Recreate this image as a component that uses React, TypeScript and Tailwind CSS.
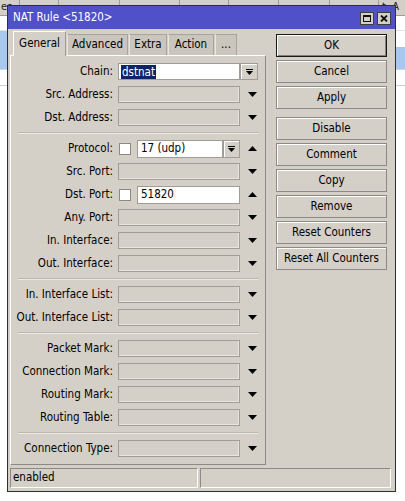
import type { ReactNode } from 'react';

// Classic WinBox-style "NAT Rule" dialog over a table in the background.

type Kind = 'combo' | 'empty' | 'check' | 'checkCombo';

function DownTri() {
  return (
    <svg width="9" height="5" viewBox="0 0 9 5" className="block">
      <polygon points="0,0 9,0 4.5,5" fill="#000" />
    </svg>
  );
}

function UpTri() {
  return (
    <svg width="9" height="5" viewBox="0 0 9 5" className="block">
      <polygon points="0,5 9,5 4.5,0" fill="#000" />
    </svg>
  );
}

function ComboBtn({ w = 'w-[18px]', h = 'h-[17px]' }: { w?: string; h?: string }) {
  return (
    <div className={`${w} ${h} shrink-0 flex items-center justify-center border border-[#a09c98] bg-[#d4d0c8] shadow-[inset_1px_1px_0_#ffffff]`}>
      <svg width="7" height="6" viewBox="0 0 7 6" className="block">
        <rect x="0" y="0" width="7" height="1" fill="#000" />
        <polygon points="0,2 7,2 3.5,6" fill="#000" />
      </svg>
    </div>
  );
}

function Field({ label, kind, value, up }: { label: string; kind: Kind; value?: string; up?: boolean }) {
  return (
    <div className="flex items-center h-[23px]">
      <div className="w-[103px] shrink-0 text-right pr-[1px] text-black whitespace-nowrap">{label}</div>
      <div className="ml-[4px] flex items-center">
        {kind === 'combo' && (
          <>
            <div className="w-[122px] h-[17px] bg-white border border-[#a09c98] flex items-center px-[2px]">
              <span className="bg-[#0a246a] text-white px-[1px] leading-[14px]">{value}</span>
            </div>
            <ComboBtn />
          </>
        )}
        {kind === 'empty' && (
          <>
            <div className="w-[122px] h-[17px] border border-[#a09c98] bg-[#d4d0c8] shadow-[inset_-1px_-1px_0_#e8e6e0]" />
            <div className="w-[22px] flex justify-center pl-[2px]"><DownTri /></div>
          </>
        )}
        {(kind === 'check' || kind === 'checkCombo') && (
          <>
            <div className="w-[12px] h-[12px] ml-[1px] bg-white border border-[#8c8a86]" />
            <div className={`${kind === 'checkCombo' ? 'w-[86px]' : 'w-[103px]'} h-[18px] ml-[6px] bg-white border border-[#a09c98] flex items-center px-[3px] text-black`}>
              {value}
            </div>
            {kind === 'checkCombo' && <ComboBtn w="w-[17px]" h="h-[18px]" />}
            <div className="w-[22px] flex justify-center pl-[2px]">{up ? <UpTri /> : <DownTri />}</div>
          </>
        )}
      </div>
    </div>
  );
}

function Sep() {
  return <div className="mx-[7px] my-[3px] h-[2px] border-t border-[#bcb8b0] border-b border-b-[#ece9e4]" />;
}

function Btn({ children, def }: { children: ReactNode; def?: boolean }) {
  return (
    <div
      className={`h-[23px] w-[111px] flex items-center justify-center text-black bg-[#d4d0c8] ${
        def
          ? 'border border-[#1a1a1a] shadow-[inset_1px_1px_0_#ffffff,inset_-1px_-1px_0_#808080]'
          : 'border border-[#8c8a86] shadow-[inset_1px_1px_0_#ffffff]'
      }`}
    >
      {children}
    </div>
  );
}

const tabs = ['General', 'Advanced', 'Extra', 'Action', '...'];

export default function App() {
  return (
    <div className="relative w-[405px] h-[501px] overflow-hidden bg-white font-['DejaVu_Sans_Condensed','DejaVu_Sans',sans-serif] text-[11.5px]">
      {/* background table */}
      <div className="h-[16px] bg-[#d4d0c8] border-b border-[#a09c98] flex text-[11px] text-[#222]">
        <div className="w-[20px] border-r border-[#a09c98] pl-[1px] leading-[14px]">es</div>
        <div className="w-[39px] border-r border-[#a09c98]" />
        <div className="w-[61px] border-r border-[#a09c98]" />
        <div className="w-[60px] border-r border-[#a09c98]" />
        <div className="w-[49px] border-r border-[#a09c98]" />
        <div className="w-[50px] border-r border-[#a09c98]" />
        <div className="w-[51px] border-r border-[#a09c98]" />
        <div className="w-[49px] border-r border-[#a09c98]" />
        <div className="flex-1 pl-[3px] leading-[14px]">t. A</div>
      </div>
      <div className="h-[15px] border-b border-[#e4e4e4]" />
      <div className="h-[16px] bg-[#a8c8f0] flex"><div className="ml-auto w-[12px] bg-white" /></div>
      <div className="h-[23px] bg-[#a8c8f0] border-b border-[#c8d8f0]" />
      <div className="h-[16px] border-b border-[#d0d0d0]" />

      {/* dialog window */}
      <div className="absolute left-[7px] top-[5px] w-[389px] h-[487px] bg-[#d4d0c8] border border-[#303030] flex flex-col">
        <div className="h-[23px] shrink-0 bg-[#5050c8] flex items-center pl-[5px] pr-[4px]">
          <span className="text-white text-[11.5px]">NAT Rule &lt;51820&gt;</span>
          <div className="ml-auto flex gap-[3px] mt-[1px]">
            <div className="w-[14px] h-[13px] bg-[#d4d0c8] border border-[#404040] flex items-center justify-center">
              <div className="w-[8px] h-[7px] border border-[#111] border-t-2" />
            </div>
            <div className="w-[14px] h-[13px] bg-[#d4d0c8] border border-[#404040] flex items-center justify-center">
              <svg width="8" height="7" viewBox="0 0 8 7">
                <path d="M1 0.5 L7 6.5 M7 0.5 L1 6.5" stroke="#111" strokeWidth="1.8" />
              </svg>
            </div>
          </div>
        </div>

        <div className="flex flex-1 pl-[2px] pt-[2px]">
          {/* left: tabs + panel */}
          <div className="flex flex-col w-[256px]">
            <div className="flex items-end h-[24px] pl-[3px]">
              {tabs.map((t, i) =>
                i === 0 ? (
                  <div key={t} className="h-[25px] w-[53px] flex items-center justify-center bg-[#d4d0c8] border-t border-l border-white border-r border-r-[#a09c98] text-black relative z-10 -mb-px">
                    {t}
                  </div>
                ) : (
                  <div
                    key={t}
                    className={`h-[21px] flex items-center justify-center bg-[#cac6be] border-t border-r border-[#a8a49c] border-l border-l-[#e8e6e0] text-black ml-[1px] ${
                      t === 'Advanced' ? 'w-[61px]' : t === 'Extra' ? 'w-[38px]' : t === 'Action' ? 'w-[46px]' : 'w-[22px]'
                    }`}
                  >
                    {t}
                  </div>
                )
              )}
            </div>
            <div className="h-[410px] border-t border-l border-white border-r border-b border-r-[#8c8a86] border-b-[#8c8a86] pt-[4px]">
              <Field label="Chain:" kind="combo" value="dstnat" />
              <Field label="Src. Address:" kind="empty" />
              <Field label="Dst. Address:" kind="empty" />
              <Sep />
              <Field label="Protocol:" kind="checkCombo" value="17 (udp)" up />
              <Field label="Src. Port:" kind="empty" />
              <Field label="Dst. Port:" kind="check" value="51820" up />
              <Field label="Any. Port:" kind="empty" />
              <Field label="In. Interface:" kind="empty" />
              <Field label="Out. Interface:" kind="empty" />
              <Sep />
              <Field label="In. Interface List:" kind="empty" />
              <Field label="Out. Interface List:" kind="empty" />
              <Sep />
              <Field label="Packet Mark:" kind="empty" />
              <Field label="Connection Mark:" kind="empty" />
              <Field label="Routing Mark:" kind="empty" />
              <Field label="Routing Table:" kind="empty" />
              <Sep />
              <Field label="Connection Type:" kind="empty" />
            </div>
          </div>

          {/* right: buttons */}
          <div className="ml-[10px] pt-[3px] flex flex-col gap-[3px]">
            <Btn def>OK</Btn>
            <Btn>Cancel</Btn>
            <Btn>Apply</Btn>
            <div className="h-[2px]" />
            <Btn>Disable</Btn>
            <Btn>Comment</Btn>
            <Btn>Copy</Btn>
            <Btn>Remove</Btn>
            <Btn>Reset Counters</Btn>
            <Btn>Reset All Counters</Btn>
          </div>
        </div>

        {/* status bar */}
        <div className="flex gap-[2px] pl-[2px] pr-[4px] pb-[3px] h-[23px]">
          <div className="w-[188px] h-[20px] border border-[#8c8a86] border-r-white border-b-white flex items-center pl-[2px] text-black">
            enabled
          </div>
          <div className="flex-1 h-[20px] border border-[#8c8a86] border-r-white border-b-white" />
        </div>
      </div>
    </div>
  );
}
